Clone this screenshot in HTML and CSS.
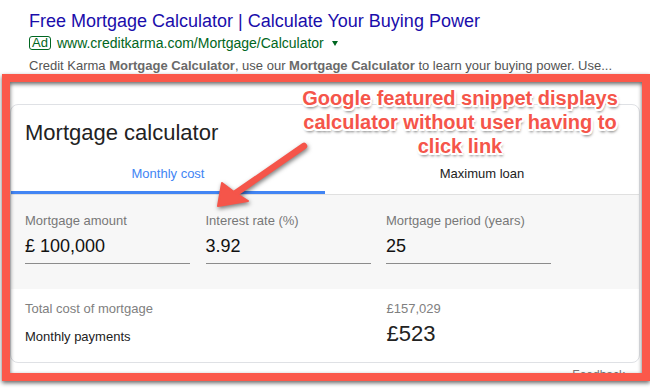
FILE: index.html
```html
<!DOCTYPE html>
<html>
<head>
<meta charset="utf-8">
<link rel="stylesheet" href="styles.css">
</head>
<body>
<div class="result">
  <div class="title">Free Mortgage Calculator | Calculate Your Buying Power</div>
  <div class="url"><span class="ad">Ad</span><span class="link">www.creditkarma.com/Mortgage/Calculator</span><span class="caret"></span></div>
  <div class="snippet">Credit Karma <b>Mortgage Calculator</b>, use our <b>Mortgage Calculator</b> to learn your buying power. Use...</div>
</div>

<div class="card">
  <div class="card-title">Mortgage calculator</div>
  <div class="tabs">
    <div class="tab active">Monthly cost</div>
    <div class="tab">Maximum loan</div>
  </div>
  <div class="inputs">
    <div class="field">
      <div class="label">Mortgage amount</div>
      <div class="value">£ 100,000</div>
    </div>
    <div class="field">
      <div class="label">Interest rate (%)</div>
      <div class="value">3.92</div>
    </div>
    <div class="field">
      <div class="label">Mortgage period (years)</div>
      <div class="value">25</div>
    </div>
  </div>
  <div class="results">
    <div class="row">
      <div class="r-label muted">Total cost of mortgage</div>
      <div class="r-value muted">£157,029</div>
    </div>
    <div class="row row2">
      <div class="r-label">Monthly payments</div>
      <div class="r-value big">£523</div>
    </div>
  </div>
</div>
<div class="feedback">Feedback</div>

<div class="frame"></div>
<svg class="arrow" width="650" height="390" viewBox="0 0 650 390">
  <line x1="304" y1="146" x2="236" y2="193" stroke="#f5554a" stroke-width="6.5" stroke-linecap="round"/>
  <polygon points="218,206 222,183 234,192 248,201" fill="#f5554a" stroke="#f5554a" stroke-width="2" stroke-linejoin="round"/>
</svg>
<div class="note">Google featured snippet displays<br>calculator without user having to<br>click link</div>
</body>
</html>
```

FILE: styles.css
```css
html, body {
  margin: 0;
  padding: 0;
  background: #fff;
  overflow: hidden;
}
body {
  width: 650px;
  height: 390px;
  position: relative;
  font-family: "Liberation Sans", Arial, sans-serif;
  color: #222;
}

.result {
  padding: 10px 0 0 29px;
}
.title {
  font-size: 18px;
  line-height: 22px;
  color: #1a0dab;
  white-space: nowrap;
}
.url {
  margin-top: 2px;
  font-size: 14px;
  line-height: 18px;
  color: #006621;
  display: flex;
  align-items: center;
  white-space: nowrap;
}
.ad {
  display: inline-block;
  font-size: 13px;
  line-height: 12px;
  padding: 0 2px;
  border: 1px solid #006621;
  border-radius: 3px;
  margin-right: 6px;
}
.caret {
  display: inline-block;
  width: 0;
  height: 0;
  border-left: 3.5px solid transparent;
  border-right: 3.5px solid transparent;
  border-top: 5px solid #006621;
  margin-left: 8px;
  margin-top: 1px;
}
.snippet {
  margin-top: 5px;
  font-size: 13px;
  line-height: 18px;
  color: #545454;
  white-space: nowrap;
}
.snippet b {
  color: #6a6a6a;
}

.card {
  margin: 29px 10px 0 10px;
  border: 1px solid #dfe1e5;
  border-radius: 8px;
  overflow: hidden;
}
.card-title {
  padding: 14px 14px 0;
  font-size: 22px;
  line-height: 28px;
  color: #222;
}
.tabs {
  display: grid;
  grid-template-columns: 1fr 1fr;
  border-bottom: 1px solid #e0e0e0;
}
.tab {
  padding: 19px 0 12px;
  font-size: 13px;
  line-height: 16px;
  text-align: center;
  color: #222;
}
.tab.active {
  color: #4285f4;
  box-shadow: inset 0 -3px 0 #4285f4;
}

.inputs {
  background: #f7f7f7;
  padding: 18px 14px 25px;
  display: grid;
  grid-template-columns: 165px 165px 165px;
  column-gap: 15.5px;
}
.label {
  font-size: 13px;
  line-height: 16px;
  color: #777;
}
.value {
  margin-top: 6px;
  padding-bottom: 6px;
  border-bottom: 1px solid #8c8c8c;
  font-size: 18px;
  line-height: 22px;
  color: #111;
}

.results {
  padding: 12px 14px 14px;
}
.row {
  display: grid;
  grid-template-columns: 346px 165px;
  column-gap: 15.5px;
  align-items: baseline;
  font-size: 13px;
  line-height: 16px;
}
.row2 {
  margin-top: 3px;
}
.muted {
  color: #808080;
}
.big {
  font-size: 22px;
  line-height: 28px;
  color: #222;
}

.feedback {
  margin-top: 5px;
  padding-right: 25px;
  text-align: right;
  font-size: 12px;
  line-height: 15px;
  color: #777;
}

.frame {
  position: absolute;
  left: 2px;
  top: 74px;
  width: 648px;
  height: 307px;
  box-sizing: border-box;
  border: 8px solid #fb584a;
  filter: drop-shadow(0 2px 2px rgba(0, 0, 0, 0.6));
}
.arrow {
  position: absolute;
  left: 0;
  top: 0;
  pointer-events: none;
  filter: drop-shadow(1px 2px 2px rgba(0, 0, 0, 0.5));
}
.note {
  position: absolute;
  left: 280px;
  top: 86px;
  width: 360px;
  text-align: center;
  font-family: "Liberation Sans", Arial, sans-serif;
  font-weight: bold;
  font-size: 20px;
  line-height: 24px;
  color: #f5554a;
  white-space: nowrap;
  text-shadow:
    -2px 0 0 #fff, 2px 0 0 #fff, 0 -2px 0 #fff, 0 2px 0 #fff,
    -1.5px -1.5px 0 #fff, 1.5px -1.5px 0 #fff, -1.5px 1.5px 0 #fff, 1.5px 1.5px 0 #fff,
    1px 3px 3px rgba(0, 0, 0, 0.6);
}
```
